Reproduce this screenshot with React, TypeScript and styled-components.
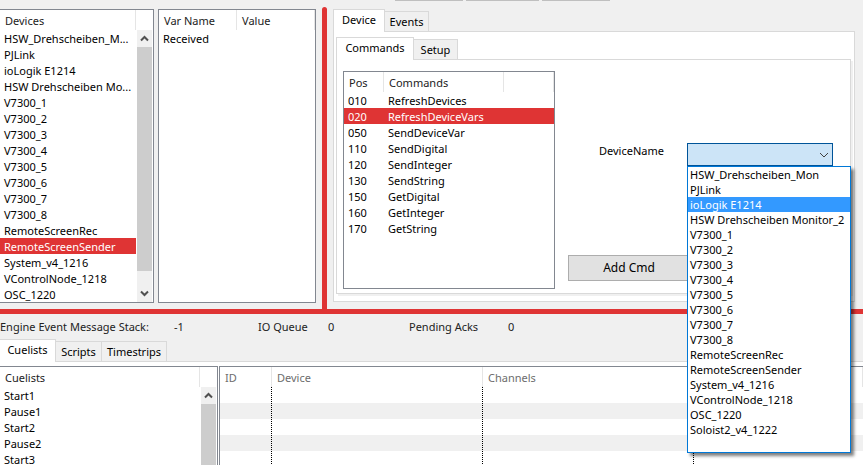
import React, { useState } from "react";
import styled, { createGlobalStyle, css } from "styled-components";

const RED = "#df3434";
const FACE = "#f0f0f0";
const LINE = "#d9d9d9";
const FRAME = "#828790";

const GlobalStyle = createGlobalStyle`
  *, *::before, *::after { box-sizing: border-box; }
  html, body { margin: 0; background: ${FACE}; }
  body, button, select {
    font-family: "Noto Sans", "Open Sans", sans-serif;
    font-size: 11px;
    line-height: 16px;
    color: #000;
  }
`;

const Page = styled.div`
  display: flex;
  flex-direction: column;
  height: 100vh;
  overflow: hidden;
  background: ${FACE};
`;

const ToolbarEdge = styled.div`
  display: flex;
  gap: 3px;
  height: 7px;
  padding-left: 395px;
`;

const ToolbarSlot = styled.div<{ $width: number }>`
  width: ${(p) => p.$width}px;
  height: 1px;
  background: #bfbfbf;
`;

const Upper = styled.section`
  display: flex;
  border-bottom: 5px solid ${RED};
`;

const Lists = styled.div`
  display: flex;
  gap: 4px;
  padding: 2px 6px 6px 0;
`;

const Splitter = styled.div`
  width: 5px;
  background: ${RED};
  border-radius: 3px 3px 0 0;
`;

const Frame = styled.div<{ $width?: number; $openLeft?: boolean; $openRight?: boolean; $openBottom?: boolean }>`
  display: flex;
  ${(p) => (p.$width ? css`flex: 0 0 ${p.$width}px;` : css`flex: 1;`)}
  min-width: 0;
  background: #fff;
  border: 1px solid ${FRAME};
  ${(p) => p.$openLeft && css`border-left: 0;`}
  ${(p) => p.$openRight && css`border-right: 0;`}
  ${(p) => p.$openBottom && css`border-bottom: 0;`}
  overflow: hidden;
`;

const Grid = styled.table`
  flex: 1;
  width: 100%;
  min-width: 0;
  align-self: flex-start;
  table-layout: fixed;
  border-collapse: separate;
  border-spacing: 0;
`;

const HeadCell = styled.th<{ $width?: number; $muted?: boolean }>`
  ${(p) => p.$width && css`width: ${p.$width}px;`}
  height: 20px;
  padding: 2px 0 0 5px;
  border-right: 1px solid #e5e5e5;
  font-weight: 400;
  line-height: 16px;
  text-align: left;
  white-space: nowrap;
  color: ${(p) => (p.$muted ? "#6d6d6d" : "#222")};
`;

const Row = styled.tr<{ $selected?: boolean; $shaded?: boolean }>`
  background: ${(p) => (p.$selected ? RED : p.$shaded ? FACE : "#fff")};
  color: ${(p) => (p.$selected ? "#fff" : "#000")};
  cursor: default;
`;

const Cell = styled.td<{ $ruled?: boolean }>`
  height: 16px;
  padding: 1px 0 0 4px;
  line-height: 15px;
  white-space: nowrap;
  ${(p) => p.$ruled && css`
    background: repeating-linear-gradient(#000 0 1px, transparent 1px 2px) right / 1px 100% no-repeat;
  `}
`;

const ScrollTrack = styled.div`
  display: flex;
  flex-direction: column;
  flex: 0 0 15px;
  margin: 20px 1px 0;
  background: ${FACE};
`;

const ScrollArrow = styled.button`
  display: flex;
  align-items: center;
  justify-content: center;
  flex: 0 0 17px;
  padding: 0;
  border: 0;
  background: ${FACE};
`;

const ScrollThumb = styled.div`
  flex: 1;
  background: #cdcdcd;
`;

const ScrollRest = styled.div<{ $height: number }>`
  flex: 0 0 ${(p) => p.$height}px;
`;

const Workspace = styled.div`
  display: flex;
  flex-direction: column;
  flex: 1;
  min-width: 0;
  padding: 2px 8px 7px 6px;
`;

const TabStrip = styled.div`
  display: flex;
  align-items: flex-end;
  height: 22px;
`;

const Tab = styled.button<{ $width: number; $active: boolean; $edge?: boolean }>`
  flex: 0 0 ${(p) => p.$width}px;
  height: ${(p) => (p.$active ? 23 : 20)}px;
  margin-bottom: ${(p) => (p.$active ? -1 : 0)}px;
  padding: 0 0 ${(p) => (p.$active ? 2 : 0)}px;
  border: 1px solid ${LINE};
  border-bottom: 0;
  ${(p) => (!p.$active || p.$edge) && css`border-left: 0;`}
  background: ${(p) => (p.$active ? "#fff" : FACE)};
  text-align: center;
  white-space: nowrap;
  z-index: ${(p) => (p.$active ? 1 : 0)};
`;

const DevicePanel = styled.div`
  display: flex;
  flex-direction: column;
  flex: 1;
  padding: 5px 3px 7px 2px;
  border: 1px solid ${LINE};
  background: #fff;
`;

const CommandPanel = styled.div`
  display: flex;
  flex: 1;
  padding: 11px 17px 4px 6px;
  border: 1px solid ${LINE};
  background: #fff;
  box-shadow: 2px 2px 0 ${FACE};
`;

const Form = styled.form`
  display: flex;
  flex-direction: column;
  justify-content: space-between;
  flex: 1;
  min-width: 0;
  padding: 72px 0 8px 13px;
`;

const Field = styled.div`
  display: flex;
  padding-left: 31px;
`;

const FieldLabel = styled.label`
  flex: 0 0 88px;
  line-height: 15px;
`;

const Combo = styled.div`
  position: relative;
  flex: 1;
  min-width: 0;
`;

const ComboSelect = styled.select`
  display: block;
  width: 100%;
  height: 23px;
  padding: 0 20px 0 4px;
  border: 1px solid #005499;
  border-radius: 0;
  background: #cce4f7;
  appearance: none;
  outline: none;
`;

const ComboArrow = styled.svg`
  position: absolute;
  top: 9px;
  right: 4px;
  pointer-events: none;
`;

const Popup = styled.ul`
  position: absolute;
  top: 100%;
  left: 0;
  z-index: 5;
  width: calc(100% + 18px);
  margin: 0;
  padding: 0 0 15px;
  border: 1px solid #0078d7;
  background: #fff;
  box-shadow: 3px 3px 3px rgba(0, 0, 0, 0.5);
  list-style: none;
`;

const PopupItem = styled.li<{ $active: boolean }>`
  height: 15px;
  padding-left: 2px;
  line-height: 15px;
  white-space: nowrap;
  background: ${(p) => (p.$active ? "#3399ff" : "#fff")};
  color: ${(p) => (p.$active ? "#fff" : "#000")};
`;

const PushButton = styled.button`
  width: 122px;
  height: 26px;
  padding: 0;
  border: 1px solid #adadad;
  background: #e1e1e1;
  font-size: 12px;
`;

const StatusBar = styled.div`
  display: flex;
  height: 25px;
  padding-top: 5px;
  color: #222;
`;

const StatusItem = styled.span<{ $width: number }>`
  flex: 0 0 ${(p) => p.$width}px;
  white-space: nowrap;
`;

const Lower = styled.section`
  display: flex;
  flex-direction: column;
  flex: 1;
  min-height: 0;
`;

const LowerPanel = styled.div`
  display: flex;
  flex: 1;
  gap: 1px;
  min-height: 0;
  padding-top: 4px;
  border-top: 1px solid ${LINE};
  background: #fff;
`;

type Column = { title: string; width?: number };

const deviceRows = [
  "HSW_Drehscheiben_M...", "PJLink", "ioLogik E1214", "HSW Drehscheiben Mo...",
  "V7300_1", "V7300_2", "V7300_3", "V7300_4", "V7300_5", "V7300_6", "V7300_7", "V7300_8",
  "RemoteScreenRec", "RemoteScreenSender", "System_v4_1216", "VControlNode_1218", "OSC_1220",
];

const deviceOptions = [
  "HSW_Drehscheiben_Mon", "PJLink", "ioLogik E1214", "HSW Drehscheiben Monitor_2",
  "V7300_1", "V7300_2", "V7300_3", "V7300_4", "V7300_5", "V7300_6", "V7300_7", "V7300_8",
  "RemoteScreenRec", "RemoteScreenSender", "System_v4_1216", "VControlNode_1218", "OSC_1220",
  "Soloist2_v4_1222",
];

const commandRows = [
  ["010", "RefreshDevices"], ["020", "RefreshDeviceVars"], ["050", "SendDeviceVar"],
  ["110", "SendDigital"], ["120", "SendInteger"], ["130", "SendString"],
  ["150", "GetDigital"], ["160", "GetInteger"], ["170", "GetString"],
];

const cuelists = ["Start1", "Pause1", "Start2", "Pause2", "Start3"];

function DataTable({ columns, rows, initial = -1, muted, striped }: {
  columns: Column[]; rows: string[][]; initial?: number; muted?: boolean; striped?: boolean;
}) {
  const [selected, setSelected] = useState(initial);
  return (
    <Grid>
      <thead>
        <tr>
          {columns.map((c, i) => (
            <HeadCell key={i} scope="col" $width={c.width} $muted={muted}>{c.title}</HeadCell>
          ))}
        </tr>
      </thead>
      <tbody>
        {rows.map((row, r) => (
          <Row key={r} $selected={r === selected} $shaded={striped && r % 2 === 1} onClick={() => setSelected(r)}>
            {columns.map((_, i) => (
              <Cell key={i} $ruled={striped && i < columns.length - 1}>{row[i] ?? ""}</Cell>
            ))}
          </Row>
        ))}
      </tbody>
    </Grid>
  );
}

function Scrollbar({ rest, open }: { rest: number; open?: boolean }) {
  return (
    <ScrollTrack>
      <ScrollArrow type="button" aria-label="Scroll up">
        <svg width="9" height="7" viewBox="0 0 9 7">
          <path d="M1 5.5 4.5 2 8 5.5" fill="none" stroke="#505050" strokeWidth="2" />
        </svg>
      </ScrollArrow>
      <ScrollThumb />
      <ScrollRest $height={rest} />
      {!open && (
        <ScrollArrow type="button" aria-label="Scroll down">
          <svg width="9" height="7" viewBox="0 0 9 7">
            <path d="M1 1.5 4.5 5 8 1.5" fill="none" stroke="#505050" strokeWidth="2" />
          </svg>
        </ScrollArrow>
      )}
    </ScrollTrack>
  );
}

function Tabs({ items, edge }: { items: { name: string; width: number }[]; edge?: boolean }) {
  return (
    <TabStrip role="tablist">
      {items.map((t, i) => (
        <Tab key={t.name} type="button" role="tab" aria-selected={i === 0} $active={i === 0} $edge={edge} $width={t.width}>
          {t.name}
        </Tab>
      ))}
    </TabStrip>
  );
}

function DeviceNameField() {
  const [value, setValue] = useState("");
  const [hovered, setHovered] = useState("ioLogik E1214");
  return (
    <Field>
      <FieldLabel htmlFor="device-name">DeviceName</FieldLabel>
      <Combo>
        <ComboSelect id="device-name" value={value} onChange={(e) => setValue(e.target.value)}>
          <option value="" />
          {deviceOptions.map((d) => <option key={d}>{d}</option>)}
        </ComboSelect>
        <ComboArrow width="10" height="6" viewBox="0 0 10 6">
          <path d="M1 1 5 5 9 1" fill="none" stroke="#404040" />
        </ComboArrow>
        <Popup role="listbox" aria-label="DeviceName">
          {deviceOptions.map((d) => (
            <PopupItem
              key={d}
              role="option"
              aria-selected={d === hovered}
              $active={d === hovered}
              onMouseEnter={() => setHovered(d)}
              onClick={() => setValue(d)}
            >
              {d}
            </PopupItem>
          ))}
        </Popup>
      </Combo>
    </Field>
  );
}

export default function App() {
  return (
    <Page>
      <GlobalStyle />
      <ToolbarEdge>
        <ToolbarSlot $width={68} />
        <ToolbarSlot $width={73} />
        <ToolbarSlot $width={68} />
      </ToolbarEdge>
      <Upper>
        <Lists>
          <Frame $width={154} $openLeft>
            <DataTable columns={[{ title: "Devices" }]} rows={deviceRows.map((d) => [d])} initial={13} />
            <Scrollbar rest={14} />
          </Frame>
          <Frame $width={158}>
            <DataTable columns={[{ title: "Var Name", width: 78 }, { title: "Value" }]} rows={[["Received"]]} />
          </Frame>
        </Lists>
        <Splitter />
        <Workspace>
          <Tabs items={[{ name: "Device", width: 52 }, { name: "Events", width: 44 }]} />
          <DevicePanel role="tabpanel" aria-label="Device">
            <Tabs items={[{ name: "Commands", width: 78 }, { name: "Setup", width: 44 }]} />
            <CommandPanel role="tabpanel" aria-label="Commands">
              <Frame $width={212}>
                <DataTable
                  columns={[{ title: "Pos", width: 40 }, { title: "Commands", width: 120 }, { title: "" }]}
                  rows={commandRows}
                  initial={1}
                />
              </Frame>
              <Form onSubmit={(e) => e.preventDefault()}>
                <DeviceNameField />
                <PushButton type="submit">Add Cmd</PushButton>
              </Form>
            </CommandPanel>
          </DevicePanel>
        </Workspace>
      </Upper>
      <StatusBar>
        <StatusItem $width={174}>Engine Event Message Stack:</StatusItem>
        <StatusItem $width={84}>-1</StatusItem>
        <StatusItem $width={70}>IO Queue</StatusItem>
        <StatusItem $width={81}>0</StatusItem>
        <StatusItem $width={99}>Pending Acks</StatusItem>
        <StatusItem $width={40}>0</StatusItem>
      </StatusBar>
      <Lower>
        <Tabs edge items={[{ name: "Cuelists", width: 56 }, { name: "Scripts", width: 46 }, { name: "Timestrips", width: 65 }]} />
        <LowerPanel role="tabpanel" aria-label="Cuelists">
          <Frame $width={218} $openLeft $openBottom>
            <DataTable columns={[{ title: "Cuelists" }]} rows={cuelists.map((c) => [c])} />
            <Scrollbar rest={0} open />
          </Frame>
          <Frame $openRight $openBottom>
            <DataTable
              striped
              muted
              columns={[{ title: "ID", width: 52 }, { title: "Device", width: 211 }, { title: "Channels", width: 211 }, { title: "" }]}
              rows={[[], [], [], [], []]}
            />
          </Frame>
        </LowerPanel>
      </Lower>
    </Page>
  );
}
